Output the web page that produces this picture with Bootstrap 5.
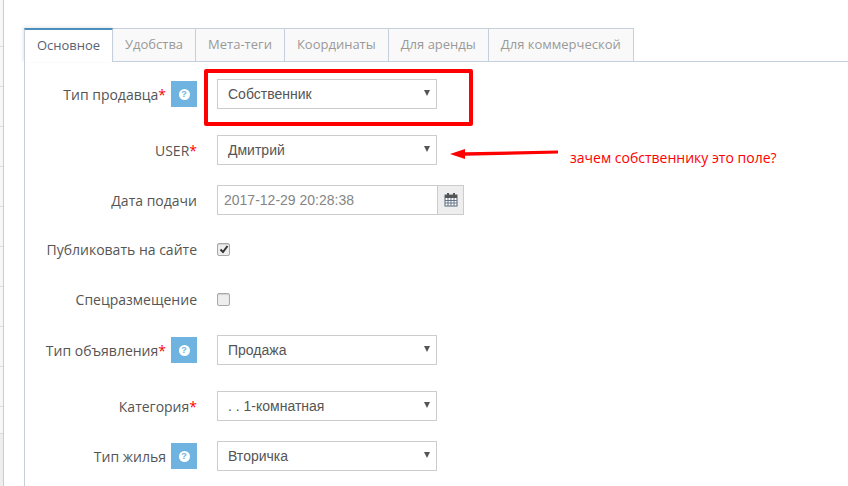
<!DOCTYPE html>
<html lang="ru">
<head>
<meta charset="utf-8">
<link href="https://cdn.jsdelivr.net/npm/bootstrap@5.3.0/dist/css/bootstrap.min.css" rel="stylesheet">
<style>
html,body{height:486px;overflow:hidden;background:#fff}
body{font-family:"Open Sans","Noto Sans",sans-serif;font-size:13px;color:#555}
.edge{width:4px;border-right:1px solid #ccc;height:486px;flex:none;background:#f7f7f7;padding-top:46px}
.edgecell{height:40px;border-top:1px solid #ddd}
.edgecell.shortcell{height:27px}
.edgecell.endcell{height:60px;background:#eee}
.shell{width:100%;padding:28px 0 0 20px}
.tabrow{height:34px;border-bottom:1px solid #c5d0dc}
.tabitem{display:flex;align-items:center;justify-content:center;height:34px;padding:0 12px;background:#f9f9f9;border:1px solid #c5d0dc;border-left:0;color:#999;font-size:13px}
.tabitem.on{background:#fff;color:#576373;border-left:1px solid #c5d0dc;border-top:2px solid #4c8fbd;border-bottom:0;width:89px;box-shadow:-1px -1px 3px rgba(0,0,0,.1);position:relative}
.panel{border-left:1px solid #c5d0dc;height:430px;position:relative;padding-top:17px}
.frow{display:flex;align-items:center;height:30px}
.lab{width:172px;display:flex;justify-content:flex-end;align-items:center;color:#555;font-size:14px;gap:0}
.liftlab{padding-bottom:2px}
.star{color:#f00}
.helpbox{width:26px;height:26px;margin-left:5px;background:#6fb3e0;display:flex;align-items:center;justify-content:center}
.helpdot{width:11px;height:11px;border-radius:50%;background:#fff;color:#6fb3e0;font:700 9px/11px "Liberation Sans",sans-serif;text-align:center}
.fieldbox{margin-left:20px;width:220px;height:30px;border:1px solid #ccc;background:#fff;display:flex;align-items:center;justify-content:space-between;padding:0 6px 0 10px;font-family:"Liberation Sans",sans-serif;font-size:14px;color:#555}
.caretdown{width:0;height:0;border-left:3.5px solid transparent;border-right:3.5px solid transparent;border-top:6px solid #555;margin-bottom:2px}
.datebox{margin-left:20px;width:220px;height:30px;border:1px solid #ccc;border-right:0;padding:0 6px;display:flex;align-items:center;font-family:"Liberation Sans",sans-serif;font-size:14px;color:#858585}
.addon{width:27px;height:30px;background:#eee;border:1px solid #ccc;display:flex;align-items:center;justify-content:center}
.tick{margin-left:20px;width:13px;height:13px;border:1px solid #a8a8a8;border-radius:2px;background:#eee;box-shadow:inset 0 1px 1px rgba(0,0,0,.12);display:flex;align-items:center;justify-content:center;margin-bottom:2px}
.redframe{position:absolute;left:179px;top:7px;width:269px;height:57px;border:4px solid #f00;border-radius:2px}
.pointer{position:absolute;left:425px;top:85px}
.note{position:absolute;left:545px;top:86px;color:#f00;font-size:14px;line-height:19px;white-space:nowrap}
.g2{margin-top:26px}.g3{margin-top:20px}
</style>
</head>
<body>
<div class="d-flex">
<div class="edge"><div class="edgecell"></div><div class="edgecell"></div><div class="edgecell"></div><div class="edgecell"></div><div class="edgecell"></div><div class="edgecell"></div><div class="edgecell"></div><div class="edgecell"></div><div class="edgecell"></div><div class="edgecell shortcell"></div><div class="edgecell endcell"></div></div>
<div class="shell">
<div class="tabrow d-flex">
<div class="tabitem on">Основное</div>
<div class="tabitem">Удобства</div>
<div class="tabitem">Мета-теги</div>
<div class="tabitem">Координаты</div>
<div class="tabitem">Для аренды</div>
<div class="tabitem">Для коммерческой</div>
</div>
<div class="panel">
<div class="frow"><div class="lab">Тип продавца<span class="star">*</span><span class="helpbox"><span class="helpdot">?</span></span></div><div class="fieldbox">Собственник<span class="caretdown"></span></div></div>
<div class="frow g2"><div class="lab">USER<span class="star">*</span></div><div class="fieldbox">Дмитрий<span class="caretdown"></span></div></div>
<div class="frow g3"><div class="lab">Дата подачи</div><div class="datebox">2017-12-29 20:28:38</div><div class="addon"><svg width="14" height="14" viewBox="0 0 14 14"><rect x="1" y="2" width="12" height="11" fill="#fff" stroke="#567"/><rect x="1" y="2" width="12" height="3" fill="#555"/><rect x="3" y="0" width="2" height="3.5" fill="#555"/><rect x="9" y="0" width="2" height="3.5" fill="#555"/><path d="M1 7.5h12M1 10h12M4 5v8M7 5v8M10 5v8" stroke="#678" stroke-width="1"/></svg></div></div>
<div class="frow g3"><div class="lab liftlab">Публиковать на сайте</div><div class="tick"><svg width="10" height="10" viewBox="0 0 10 10"><path d="M1.5 5.5 4 8l4.5-6" fill="none" stroke="#333" stroke-width="2"/></svg></div></div>
<div class="frow g3"><div class="lab liftlab">Спецразмещение</div><div class="tick"></div></div>
<div class="frow g3"><div class="lab">Тип объявления<span class="star">*</span><span class="helpbox"><span class="helpdot">?</span></span></div><div class="fieldbox">Продажа<span class="caretdown"></span></div></div>
<div class="frow g2"><div class="lab">Категория<span class="star">*</span></div><div class="fieldbox">. . 1-комнатная<span class="caretdown"></span></div></div>
<div class="frow g3"><div class="lab">Тип жилья<span class="helpbox"><span class="helpdot">?</span></span></div><div class="fieldbox">Вторичка<span class="caretdown"></span></div></div>
<div class="redframe"></div>
<svg class="pointer" width="110" height="14" viewBox="0 0 110 14"><path d="M0 7 15 2V5.2L108 3.5V6.5L15 8.8V12Z" fill="#f00"/></svg>
<div class="note">зачем собственнику это поле?</div>
</div>
</div>
</div>
</body>
</html>
